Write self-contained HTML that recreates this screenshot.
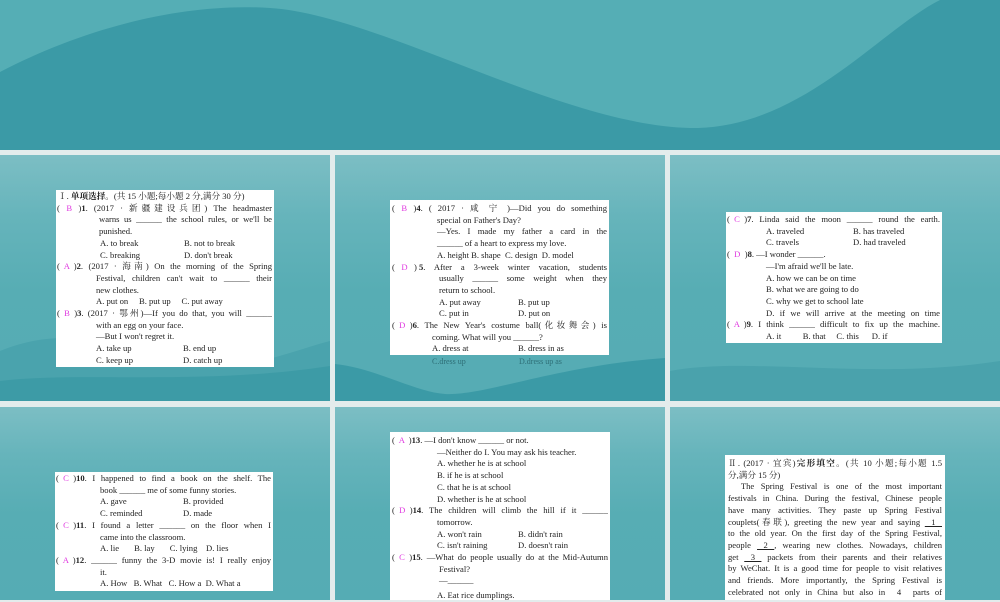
<!DOCTYPE html>
<html><head><meta charset="utf-8"><style>
*{margin:0;padding:0;box-sizing:border-box}
body{width:1000px;height:600px;overflow:hidden;background:#e3ecec;position:relative;font-family:"Liberation Serif","Noto Serif CJK SC",serif;color:#222}
.slide{position:absolute;overflow:hidden;background:linear-gradient(180deg,#7cbec4 0%,#66b4bb 25%,#57adb4 55%,#55acb4 100%)}
.slide svg{position:absolute;left:0;bottom:0}
.box{position:absolute;background:#fff;font-size:8.6px;line-height:11.7px;white-space:nowrap}
.l{position:absolute;height:11.7px}
.a{color:#e03ce0}
b{font-weight:bold}
.j{text-align:justify;text-align-last:justify;white-space:normal;overflow:hidden}
.p{display:inline-block;text-align-last:auto;white-space:pre}
</style></head><body>
<svg width="1000" height="150" style="position:absolute;left:0;top:0">
<rect width="1000" height="150" fill="#55aeb5"/>
<path d="M0,72 C80,30 180,2 270,8 C380,15 560,125 690,128 C800,130 880,30 940,0 L1000,0 L1000,150 L0,150Z" fill="#3b9aa6"/>
</svg>

<!-- slide 1 -->
<div class="slide" style="left:0;top:155px;width:330px;height:246px">
<svg width="330" height="80" viewBox="0 0 330 80"><path d="M0,30 C60,5 120,20 180,40 C240,55 290,30 330,20 L330,80 L0,80Z" fill="#4aa3ad"/><path d="M0,60 C80,50 200,65 330,45 L330,80 L0,80Z" fill="#3d9ba6"/></svg>
</div>
<div class="box" style="left:56px;top:190px;width:218px;height:177px">
<div class="l" style="top:1px;left:2px">Ⅰ. <b>单项选择</b>。(共 15 小题;每小题 2 分,满分 30 分)</div>
<div class="l j" style="top:12.7px;left:1px;width:215px"><span class="p">(   <span class="a">B</span>   )<b>1</b>.</span> (2017 · 新疆建设兵团) The headmaster</div>
<div class="l j" style="top:24.4px;left:43px;width:173px">warns us ______ the school rules, or we'll be</div>
<div class="l" style="top:36.1px;left:43px">punished.</div>
<div class="l" style="top:47.8px;left:44px">A. to break</div><div class="l" style="top:47.8px;left:128px">B. not to break</div>
<div class="l" style="top:59.5px;left:44px">C. breaking</div><div class="l" style="top:59.5px;left:128px">D. don't break</div>
<div class="l j" style="top:71.2px;left:1px;width:215px"><span class="p">(  <span class="a">A</span>  )<b>2</b>.</span> (2017 · 海南) On the morning of the Spring</div>
<div class="l j" style="top:82.9px;left:40px;width:176px">Festival, children can't wait to ______ their</div>
<div class="l" style="top:94.6px;left:40px">new clothes.</div>
<div class="l" style="top:106.3px;left:40px">A. put on &nbsp;&nbsp;&nbsp;&nbsp;B. put up &nbsp;&nbsp;&nbsp;&nbsp;C. put away</div>
<div class="l j" style="top:118px;left:1px;width:215px"><span class="p">(  <span class="a">B</span>  )<b>3</b>.</span> (2017 · 鄂州)—If you do that, you will ______</div>
<div class="l" style="top:129.7px;left:40px">with an egg on your face.</div>
<div class="l" style="top:141.4px;left:40px">—But I won't regret it.</div>
<div class="l" style="top:153.1px;left:40px">A. take up</div><div class="l" style="top:153.1px;left:127px">B. end up</div>
<div class="l" style="top:164.8px;left:40px">C. keep up</div><div class="l" style="top:164.8px;left:127px">D. catch up</div>
</div>

<!-- slide 2 -->
<div class="slide" style="left:335px;top:155px;width:330px;height:246px">
<svg width="330" height="45" viewBox="0 0 330 45"><rect width="330" height="45" fill="#3b9aa6"/><path d="M0,8 C40,12 80,36 110,38 C150,40 220,10 330,2 L330,0 L0,0Z" fill="#56acb4"/></svg>
</div>
<div class="box" style="left:390px;top:200px;width:219px;height:155px">
<div class="l j" style="top:3px;left:2px;width:215px"><span class="p">(   <span class="a">B</span>   )<b>4</b>.</span> ( 2017 · 咸 宁 )—Did you do something</div>
<div class="l" style="top:14.7px;left:47px">special on Father's Day?</div>
<div class="l j" style="top:26.4px;left:47px;width:170px">—Yes. I made my father a card in the</div>
<div class="l" style="top:38.1px;left:47px">______ of a heart to express my love.</div>
<div class="l" style="top:49.8px;left:47px">A. height B. shape &nbsp;C. design &nbsp;D. model</div>
<div class="l j" style="top:61.5px;left:2px;width:215px"><span class="p">(   <span class="a">D</span>   ) <b>5</b>.</span> After a 3-week winter vacation, students</div>
<div class="l j" style="top:73.2px;left:49px;width:168px">usually ______ some weight when they</div>
<div class="l" style="top:84.9px;left:49px">return to school.</div>
<div class="l" style="top:96.6px;left:49px">A. put away</div><div class="l" style="top:96.6px;left:128px">B. put up</div>
<div class="l" style="top:108.3px;left:49px">C. put in</div><div class="l" style="top:108.3px;left:128px">D. put on</div>
<div class="l j" style="top:120px;left:2px;width:215px"><span class="p">(  <span class="a">D</span>  )<b>6</b>.</span> The New Year's costume ball(化妆舞会) is</div>
<div class="l" style="top:131.7px;left:42px">coming. What will you ______?</div>
<div class="l" style="top:143.4px;left:42px">A. dress at</div><div class="l" style="top:143.4px;left:128px">B. dress in as</div>
</div>
<div style="position:absolute;left:432px;top:357px;font-size:8px;color:#2e6f77;font-family:'Liberation Serif',serif">C.dress up</div>
<div style="position:absolute;left:519px;top:357px;font-size:8px;color:#2e6f77;font-family:'Liberation Serif',serif">D.dress up as</div>

<!-- slide 3 -->
<div class="slide" style="left:670px;top:155px;width:330px;height:246px">
<svg width="330" height="60" viewBox="0 0 330 60"><path d="M0,30 C80,15 200,40 330,20 L330,60 L0,60Z" fill="#4aa2ac"/></svg>
</div>
<div class="box" style="left:726px;top:212px;width:216px;height:131px">
<div class="l j" style="top:2px;left:1px;width:213px"><span class="p">(  <span class="a">C</span>  )<b>7</b>.</span> Linda said the moon ______ round the earth.</div>
<div class="l" style="top:13.7px;left:40px">A. traveled</div><div class="l" style="top:13.7px;left:127px">B. has traveled</div>
<div class="l" style="top:25.4px;left:40px">C. travels</div><div class="l" style="top:25.4px;left:127px">D. had traveled</div>
<div class="l" style="top:37.1px;left:1px">(&nbsp; <span class="a">D</span> &nbsp;)<b>8</b>. —I wonder ______.</div>
<div class="l" style="top:48.8px;left:40px">—I'm afraid we'll be late.</div>
<div class="l" style="top:60.5px;left:40px">A. how we can be on time</div>
<div class="l" style="top:72.2px;left:40px">B. what we are going to do</div>
<div class="l" style="top:83.9px;left:40px">C. why we get to school late</div>
<div class="l j" style="top:95.6px;left:40px;width:174px">D. if we will arrive at the meeting on time</div>
<div class="l j" style="top:107.3px;left:1px;width:213px"><span class="p">(  <span class="a">A</span>  )<b>9</b>.</span> I think ______ difficult to fix up the machine.</div>
<div class="l" style="top:119px;left:40px">A. it &nbsp;&nbsp;&nbsp;&nbsp;&nbsp;&nbsp;&nbsp;&nbsp;&nbsp;B. that &nbsp;&nbsp;&nbsp;&nbsp;C. this &nbsp;&nbsp;&nbsp;&nbsp;&nbsp;D. if</div>
</div>

<!-- slide 4 -->
<div class="slide" style="left:0;top:407px;width:330px;height:193px"></div>
<div class="box" style="left:55px;top:472px;width:218px;height:119px">
<div class="l j" style="top:1px;left:1px;width:215px"><span class="p">(  <span class="a">C</span>  )<b>10</b>.</span> I happened to find a book on the shelf. The</div>
<div class="l" style="top:12.7px;left:45px">book ______ me of some funny stories.</div>
<div class="l" style="top:24.4px;left:45px">A. gave</div><div class="l" style="top:24.4px;left:128px">B. provided</div>
<div class="l" style="top:36.1px;left:45px">C. reminded</div><div class="l" style="top:36.1px;left:128px">D. made</div>
<div class="l j" style="top:47.8px;left:1px;width:215px"><span class="p">(  <span class="a">C</span>  )<b>11</b>.</span> I found a letter ______ on the floor when I</div>
<div class="l" style="top:59.5px;left:45px">came into the classroom.</div>
<div class="l" style="top:71.2px;left:45px">A. lie &nbsp;&nbsp;&nbsp;&nbsp;&nbsp;&nbsp;B. lay &nbsp;&nbsp;&nbsp;&nbsp;&nbsp;&nbsp;C. lying &nbsp;&nbsp;&nbsp;D. lies</div>
<div class="l j" style="top:82.9px;left:1px;width:215px"><span class="p">(  <span class="a">A</span>  )<b>12</b>.</span> ______ funny the 3-D movie is! I really enjoy</div>
<div class="l" style="top:94.6px;left:45px">it.</div>
<div class="l" style="top:106.3px;left:45px">A. How &nbsp;&nbsp;B. What &nbsp;&nbsp;C. How a &nbsp;D. What a</div>
</div>

<!-- slide 5 -->
<div class="slide" style="left:335px;top:407px;width:330px;height:193px"></div>
<div class="box" style="left:390px;top:432px;width:220px;height:168px">
<div class="l" style="top:3px;left:2px">(&nbsp; <span class="a">A</span> &nbsp;)<b>13</b>. —I don't know ______ or not.</div>
<div class="l" style="top:14.7px;left:47px">—Neither do I. You may ask his teacher.</div>
<div class="l" style="top:26.4px;left:47px">A. whether he is at school</div>
<div class="l" style="top:38.1px;left:47px">B. if he is at school</div>
<div class="l" style="top:49.8px;left:47px">C. that he is at school</div>
<div class="l" style="top:61.5px;left:47px">D. whether is he at school</div>
<div class="l j" style="top:73.2px;left:2px;width:216px"><span class="p">(  <span class="a">D</span>  )<b>14</b>.</span> The children will climb the hill if it ______</div>
<div class="l" style="top:84.9px;left:47px">tomorrow.</div>
<div class="l" style="top:96.6px;left:47px">A. won't rain</div><div class="l" style="top:96.6px;left:128px">B. didn't rain</div>
<div class="l" style="top:108.3px;left:47px">C. isn't raining</div><div class="l" style="top:108.3px;left:128px">D. doesn't rain</div>
<div class="l j" style="top:120px;left:2px;width:216px"><span class="p">(  <span class="a">C</span>  )<b>15</b>.</span> —What do people usually do at the Mid-Autumn</div>
<div class="l" style="top:131.7px;left:49px">Festival?</div>
<div class="l" style="top:143.4px;left:49px">—______</div>
<div class="l" style="top:158px;left:47px">A. Eat rice dumplings.</div>
</div>

<!-- slide 6 -->
<div class="slide" style="left:670px;top:407px;width:330px;height:193px"></div>
<div class="box" style="left:725px;top:455px;width:220px;height:145px">
<div class="l j" style="top:3px;left:3px;width:214px">Ⅱ. (2017 · 宜宾)<b>完形填空</b>。(共 10 小题;每小题 1.5</div>
<div class="l" style="top:14.7px;left:3px">分,满分 15 分)</div>
<div class="l j" style="top:26.4px;left:3px;width:214px"><span class="p">      </span>The Spring Festival is one of the most important</div>
<div class="l j" style="top:38.1px;left:3px;width:214px">festivals in China. During the festival, Chinese people</div>
<div class="l j" style="top:49.8px;left:3px;width:214px">have many activities. They paste up Spring Festival</div>
<div class="l j" style="top:61.5px;left:3px;width:214px">couplets(春联), greeting the new year and saying <u class="p">   1   </u></div>
<div class="l j" style="top:73.2px;left:3px;width:214px">to the old year. On the first day of the Spring Festival,</div>
<div class="l j" style="top:84.9px;left:3px;width:214px">people <u class="p">   2   </u>, wearing new clothes. Nowadays, children</div>
<div class="l j" style="top:96.6px;left:3px;width:214px">get <u class="p">   3   </u> packets from their parents and their relatives</div>
<div class="l j" style="top:108.3px;left:3px;width:214px">by WeChat. It is a good time for people to visit relatives</div>
<div class="l j" style="top:120px;left:3px;width:214px">and friends. More importantly, the Spring Festival is</div>
<div class="l j" style="top:131.7px;left:3px;width:214px">celebrated not only in China but also in <span class="p">   4   </span> parts of</div>
</div>
</body></html>
